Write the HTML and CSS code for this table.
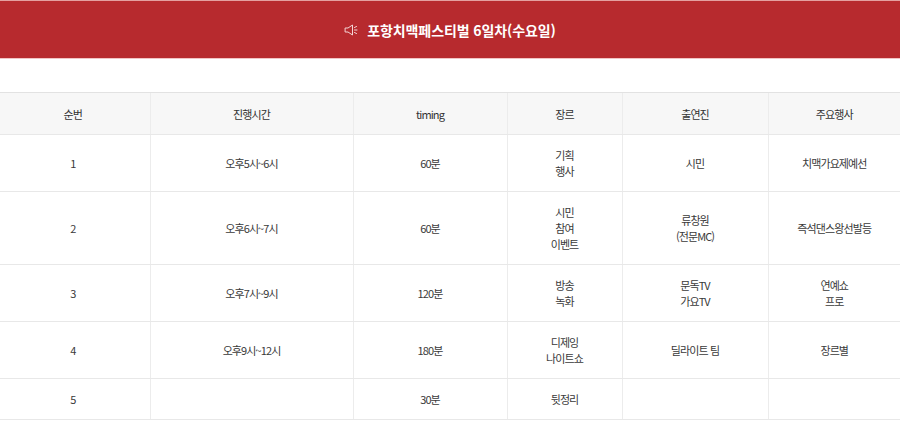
FILE: index.html
```html
<!DOCTYPE html>
<html lang="ko">
<head>
<meta charset="utf-8">
<title>포항치맥페스티벌 6일차</title>
<link rel="stylesheet" href="styles.css">
</head>
<body>
<div class="banner">
  <h2 class="banner-title">
    <svg class="icon" width="14" height="12" viewBox="0 0 14 12" fill="none" stroke="#f4d6d6" stroke-width="1" stroke-linejoin="round" stroke-linecap="round">
      <path d="M1.5 4 H4 L8.5 1 V11 L4 8 H1.5 Z"/>
      <path d="M10.5 3.5 L12.5 2.5"/>
      <path d="M10.5 6 H13"/>
      <path d="M10.5 8.5 L12.5 9.5"/>
    </svg>
    <span>포항치맥페스티벌 6일차(수요일)</span>
  </h2>
</div>
<div class="content">
  <table class="schedule">
    <colgroup>
      <col class="c1"><col class="c2"><col class="c3"><col class="c4"><col class="c5"><col class="c6">
    </colgroup>
    <thead>
      <tr><th>순번</th><th>진행시간</th><th>timing</th><th>장르</th><th>출연진</th><th>주요행사</th></tr>
    </thead>
    <tbody>
      <tr><td>1</td><td>오후5시~6시</td><td>60분</td><td>기획<br>행사</td><td>시민</td><td>치맥가요제예선</td></tr>
      <tr><td>2</td><td>오후6시~7시</td><td>60분</td><td>시민<br>참여<br>이벤트</td><td>류창원<br>(전문MC)</td><td>즉석댄스왕선발등</td></tr>
      <tr><td>3</td><td>오후7시~9시</td><td>120분</td><td>방송<br>녹화</td><td>문독TV<br>가요TV</td><td>연예쇼<br>프로</td></tr>
      <tr><td>4</td><td>오후9시~12시</td><td>180분</td><td>디제잉<br>나이트쇼</td><td>딜라이트 팀</td><td>장르별</td></tr>
      <tr><td>5</td><td></td><td>30분</td><td>뒷정리</td><td></td><td></td></tr>
    </tbody>
  </table>
</div>
</body>
</html>
```

FILE: styles.css
```css
* { box-sizing: border-box; }
html, body { margin: 0; padding: 0; background: #fff; }
body {
  font-family: "Noto Sans CJK KR", "Noto Sans", sans-serif;
  color: #3a3a3a;
}
.banner {
  height: 59px;
  background: #b72a2e;
  border-top: 1px solid #e4a0a0;
  border-bottom: 1px solid #f2c4c4;
  display: flex;
  align-items: center;
  justify-content: center;
}
.banner-title {
  margin: 0;
  display: flex;
  align-items: center;
  gap: 9px;
  color: #fff;
  font-size: 14px;
  font-weight: 700;
  letter-spacing: -0.1px;
}
.icon { display: block; }
.content { padding-top: 33px; }
.schedule {
  width: 900px;
  border-collapse: collapse;
  table-layout: fixed;
  font-size: 11px;
  line-height: 16px;
  letter-spacing: -0.9px;
}
.c1 { width: 150px; }
.c2 { width: 203px; }
.c3 { width: 154px; }
.c4 { width: 115px; }
.c5 { width: 146px; }
.c6 { width: 132px; }
.schedule th, .schedule td {
  text-align: center;
  vertical-align: middle;
  padding: 12px 0;
  border-bottom: 1px solid #e8e8e8;
  border-left: 1px solid #ececec;
  font-weight: 400;
  color: #3a3a3a;
}
.schedule th:first-child, .schedule td:first-child { border-left: 0; padding-right: 4px; }
.schedule thead th {
  background: #f7f7f7;
  border-top: 1px solid #e2e2e2;
  padding-top: 13px;
  color: #333;
}
```
